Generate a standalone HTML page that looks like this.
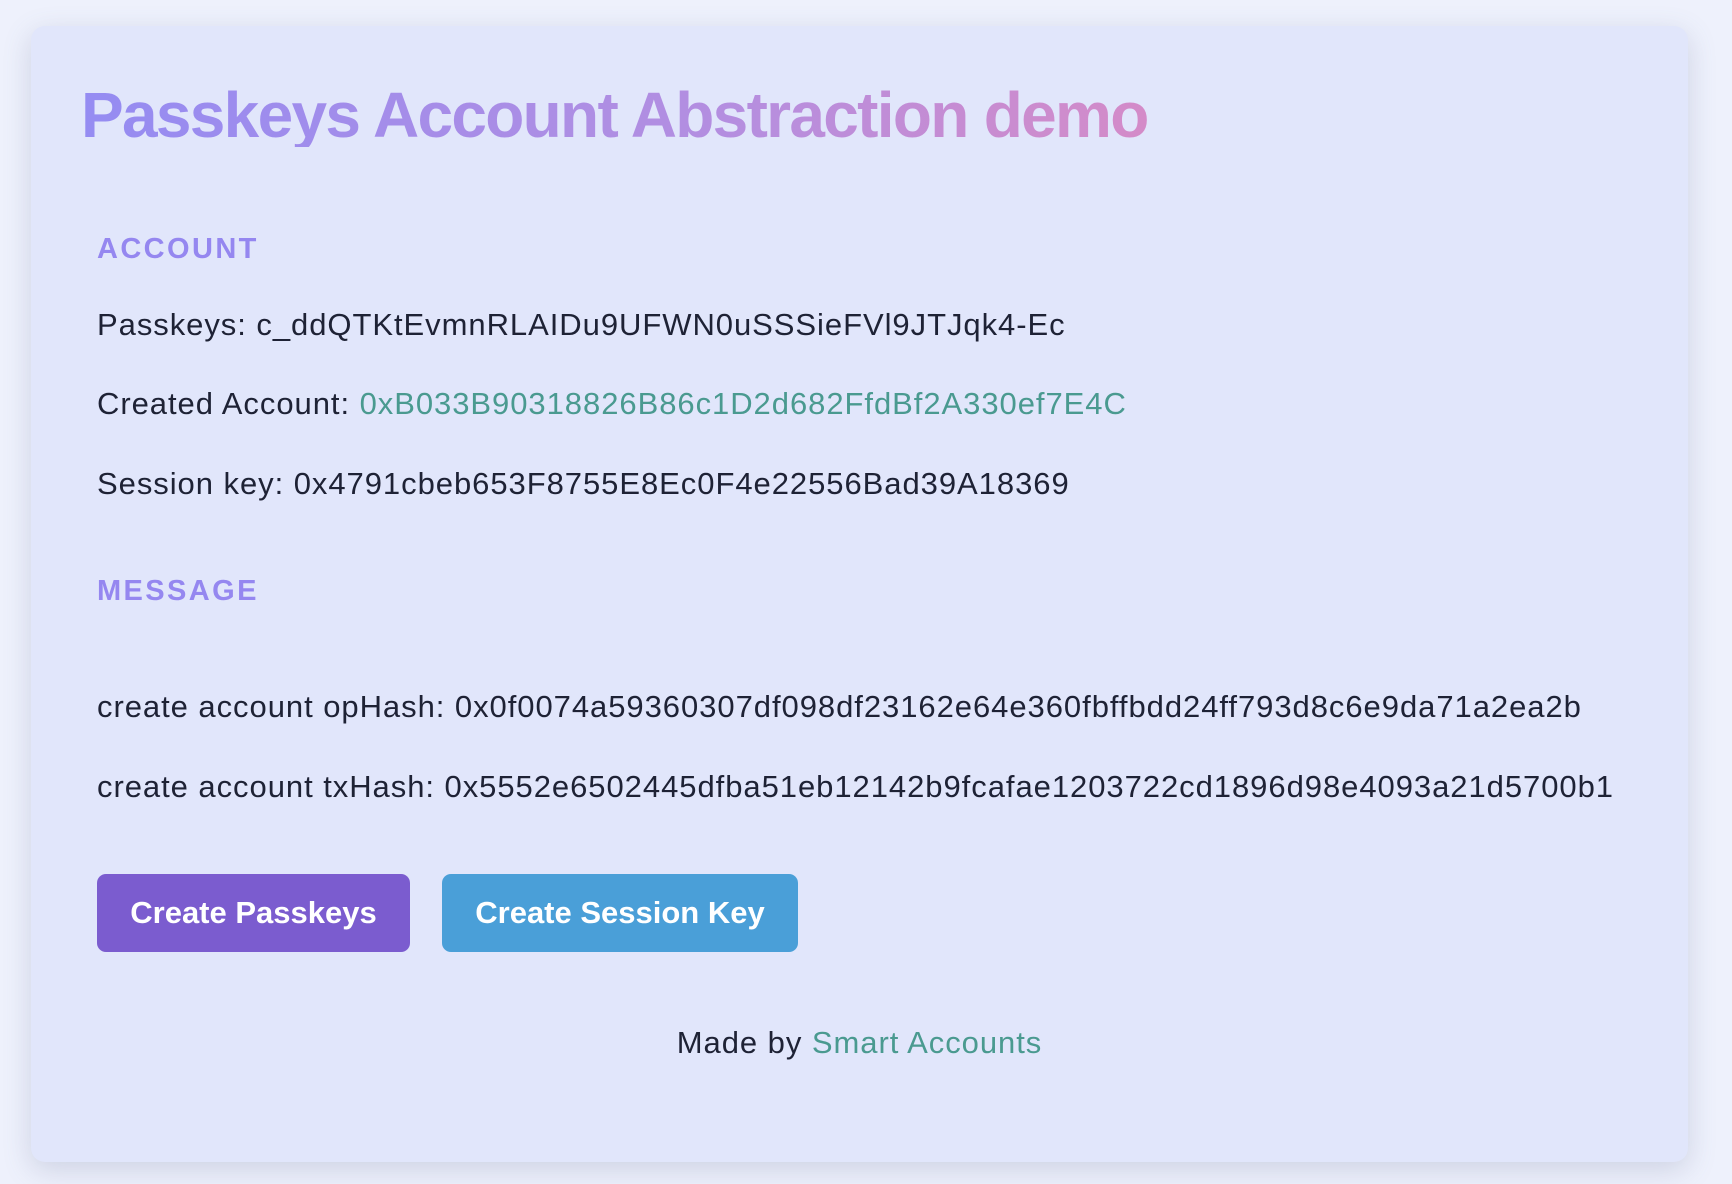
<!DOCTYPE html>
<html><head><meta charset="utf-8"><style>
html,body{margin:0;padding:0}
body{width:1732px;height:1184px;background:#eef1fc;position:relative;overflow:hidden;font-family:"Liberation Sans",sans-serif;color:#1e2235}
.card{position:absolute;left:31px;top:26px;width:1657px;height:1136px;background:#e1e6fb;border-radius:14px;box-shadow:0 8px 28px rgba(90,100,140,.22)}
.t{position:absolute;line-height:1;white-space:nowrap}
.title{left:81px;top:83px;font-size:64px;font-weight:bold;background:linear-gradient(90deg,#958cf2,#b48ee0 60%,#d48bc8);-webkit-background-clip:text;background-clip:text;color:transparent;letter-spacing:-1.7px}
.h{font-size:29px;font-weight:bold;color:#9587f0;left:97px;letter-spacing:2.4px}
.b{font-size:31px;left:97px;letter-spacing:0.95px}
.a{color:#4a9a90}
.btn{position:absolute;top:874px;height:78px;border-radius:9px;color:#fff;font-weight:bold;font-size:31px;display:flex;align-items:center;justify-content:center}
</style></head><body>
<div class="card"></div>
<div class="t title">Passkeys Account Abstraction demo</div>
<div class="t h" style="top:235px">ACCOUNT</div>
<div class="t b" style="top:309px">Passkeys: c_ddQTKtEvmnRLAIDu9UFWN0uSSSieFVl9JTJqk4-Ec</div>
<div class="t b" style="top:388px">Created Account: <span class="a">0xB033B90318826B86c1D2d682FfdBf2A330ef7E4C</span></div>
<div class="t b" style="top:468px">Session key: 0x4791cbeb653F8755E8Ec0F4e22556Bad39A18369</div>
<div class="t h" style="top:577px">MESSAGE</div>
<div class="t b" style="top:691px">create account opHash: 0x0f0074a59360307df098df23162e64e360fbffbdd24ff793d8c6e9da71a2ea2b</div>
<div class="t b" style="top:771px">create account txHash: 0x5552e6502445dfba51eb12142b9fcafae1203722cd1896d98e4093a21d5700b1</div>
<div class="btn" style="left:97px;width:313px;background:#7b5ccf">Create Passkeys</div>
<div class="btn" style="left:442px;width:356px;background:#4a9fd8">Create Session Key</div>
<div class="t b" style="left:0;width:1719px;text-align:center;top:1027px">Made by <span class="a">Smart Accounts</span></div>
</body></html>
